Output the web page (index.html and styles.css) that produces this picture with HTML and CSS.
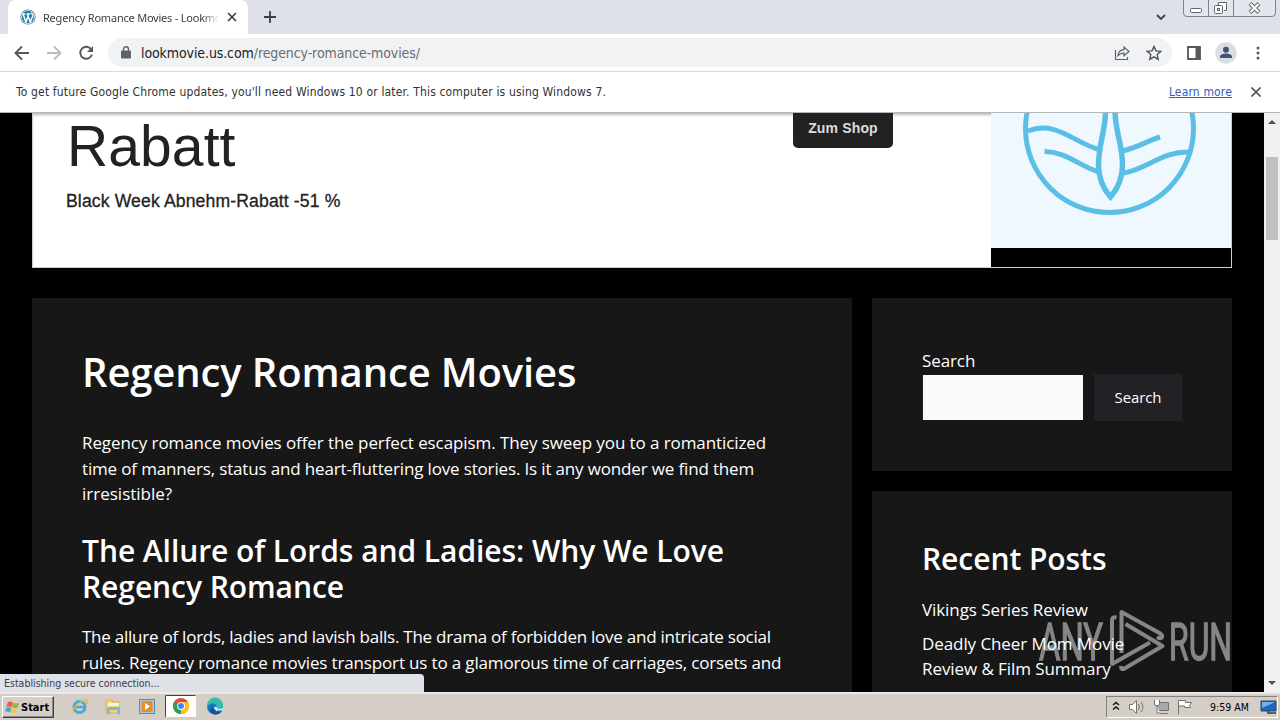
FILE: index.html
```html
<!DOCTYPE html>
<html lang="en">
<head>
<meta charset="utf-8">
<title>Regency Romance Movies</title>
<link rel="stylesheet" href="styles.css">
</head>
<body>
<div class="screen">
  <header class="tabstrip">
    <div class="tab">
      <svg class="favicon" width="16" height="16" viewBox="0 0 16 16"><circle cx="8" cy="8" r="7.600" fill="#287ba7"/><circle cx="8" cy="8" r="6.600" fill="none" stroke="#d8edf6" stroke-width=".8"/><path d="M2.200 5h3.200M6.600 5h3.700M3 5l3 8 2-5.500M7.300 5l3 8L13 6.500c.3-1-1.800-1.600-1.500-3" fill="none" stroke="#fff" stroke-width="1.500"/></svg>
      <span class="tab-title">Regency Romance Movies - Lookmov</span>
      <svg class="tab-close" width="10" height="10" viewBox="0 0 10 10"><path d="M1 1l8 8M9 1l-8 8" stroke="#3c4043" stroke-width="1.700"/></svg>
    </div>
    <svg class="newtab" width="12" height="12" viewBox="0 0 12 12"><path d="M6 0v12M0 6h12" stroke="#3c4043" stroke-width="1.800"/></svg>
    <svg class="tabsearch" width="12" height="8" viewBox="0 0 12 8"><path d="M2 2l4 4 4-4" fill="none" stroke="#3c4043" stroke-width="1.800"/></svg>
    <svg class="winctl" width="94" height="18" viewBox="0 0 94 18"><path d="M.5 0v13q0 3.500 3.500 3.500h85q3.500 0 3.500-3.500V0M25.500 0v16M50.500 0v16" fill="#e3e6ec" stroke="#7e828a"/><rect x="7.500" y="8.500" width="11" height="4" rx="1" fill="#fff" stroke="#63666c"/><path d="M35.500 5V2.500h8v8H41" fill="#fff" stroke="#63666c"/><rect x="31.500" y="5.500" width="8" height="8" rx="1" fill="#fff" stroke="#63666c"/><rect x="34.500" y="8.500" width="2" height="2" fill="none" stroke="#63666c"/><path d="M67 3.500l9 9M76 3.500l-9 9" stroke="#63666c" stroke-width="4"/><path d="M67.500 4l8 8M75.500 4l-8 8" stroke="#fff" stroke-width="2.200"/></svg>
  </header>

  <div class="toolbar">
    <svg class="nav" width="100" height="20" viewBox="0 0 100 20"><g fill="none" stroke-width="1.900"><path d="M21 10H8M14 3.500L7.500 10l6.500 6.500" stroke="#55585c"/><path d="M39 10h13M46 3.500l6.500 6.500-6.500 6.500" stroke="#babcbe"/><path d="M83.300 6.500A6 6 0 1 0 84 11.500" stroke="#55585c"/></g><path d="M85 3v6h-6z" fill="#55585c"/></svg>
    <div class="omnibox">
      <svg width="10" height="13" viewBox="0 0 10 13"><rect y="4.500" width="10" height="8" rx="1" fill="#5f6368"/><path d="M2.500 5V3.300a2.500 2.500 0 0 1 5 0V5" fill="none" stroke="#5f6368" stroke-width="1.400"/></svg>
      <span class="url">lookmovie.us.com<span class="path">/regency-romance-movies/</span></span>
      <svg class="share" width="16" height="16" viewBox="0 0 16 16"><path d="M1.500 5v9.500h12V12M4 10.500c.4-4 2.500-5.700 6-5.800V2l5 4.500-5 4.300V8.200c-2.800 0-4.500.6-6 2.300z" fill="none" stroke="#5f6368" stroke-width="1.200"/></svg>
      <svg width="16" height="16" viewBox="0 0 16 16"><path d="M8 1.500l2 4.400 4.700.5-3.500 3.200 1 4.700L8 11.900l-4.200 2.400 1-4.700L1.300 6.400 6 5.900z" fill="none" stroke="#4f5358" stroke-width="1.400"/></svg>
    </div>
    <svg class="panel" width="14" height="14" viewBox="0 0 14 14"><path d="M1 1h12v12H1z" fill="none" stroke="#55585c" stroke-width="1.800"/><path d="M8.500 1H13v12H8.500z" fill="#55585c"/></svg>
    <svg class="avatar" width="22" height="22" viewBox="0 0 22 22"><circle cx="11" cy="11" r="10.700" fill="#dadde3"/><circle cx="11" cy="7.700" r="3" fill="#46536f"/><path d="M5 16v-1.500c0-2 3.500-3 6-3s6 1 6 3V16z" fill="#46536f"/></svg>
    <svg class="dots" width="4" height="14" viewBox="0 0 4 14"><g fill="#55585c"><circle cx="2" cy="2" r="1.500"/><circle cx="2" cy="7" r="1.500"/><circle cx="2" cy="12" r="1.500"/></g></svg>
  </div>

  <div class="infobar">
    <span class="info-text">To get future Google Chrome updates, you'll need Windows 10 or later. This computer is using Windows 7.</span>
    <a class="learn">Learn more</a>
    <svg width="10" height="10" viewBox="0 0 10 10"><path d="M.5.5l9 9M9.500.5l-9 9" stroke="#55585c" stroke-width="1.700"/></svg>
  </div>

  <div class="viewport">
    <div class="page">
      <section class="banner">
        <div class="ad-copy">
          <div class="ad-title">Rabatt</div>
          <div class="ad-sub">Black Week Abnehm-Rabatt -51 %</div>
        </div>
        <div class="ad-button">Zum Shop</div>
        <div class="ad-art">
          <svg width="240" height="135" viewBox="0 0 240 135"><g fill="none" stroke="#5bbfe5" stroke-width="5"><circle cx="118.500" cy="15.500" r="84"/><path d="M114.500-2c0 20-7 33-7 54 0 14 5 24 12 32 7-8 12-17 12-32 0-21-7.500-34-7.500-54" stroke-width="5.500"/><path d="M37 18c28-11 46 12 71 18.500M53.500 38.500c21 0 34 14 53 20M131.500 38c14-3 25-10 37.500-14M132.500 60c22-3 39-22 66-21"/></g></svg>
        </div>
      </section>
      <div class="columns">
        <article class="card post">
          <h1>Regency Romance Movies</h1>
          <p class="intro"><span class="snug">Regency romance movies offer the perfect escapism. They sweep you to a romanticized</span><br><span class="tight">time of manners, status and heart-fluttering love stories. Is it any wonder we find them</span><br>irresistible?</p>
          <h2>The Allure of Lords and Ladies: Why We Love<br>Regency Romance</h2>
          <p><span class="tighter">The allure of lords, ladies and lavish balls. The drama of forbidden love and intricate social</span><br><span class="tight">rules. Regency romance movies transport us to a glamorous time of carriages, corsets and</span></p>
        </article>
        <aside>
          <div class="card search">
            <label>Search</label>
            <div class="search-row"><div class="field"></div><div class="button">Search</div></div>
          </div>
          <div class="card recent">
            <h2>Recent Posts</h2>
            <ul><li>Vikings Series Review</li><li>Deadly Cheer Mom Movie<br>Review &amp; Film Summary</li></ul>
          </div>
        </aside>
      </div>
    </div>
    <div class="scrollbar">
      <svg width="8" height="4" viewBox="0 0 8 4"><path d="M0 4l4-4 4 4z" fill="#505050"/></svg>
      <div class="thumb"></div>
      <svg class="down" width="8" height="4" viewBox="0 0 8 4"><path d="M0 0l4 4 4-4z" fill="#505050"/></svg>
    </div>
    <div class="status">Establishing secure connection...</div>
    <svg class="watermark" width="200" height="70" viewBox="1035 606 200 70"><g fill="#fff" stroke="#fff" stroke-width="1.300" font-family="Roboto, sans-serif" font-size="52"><text x="1039" y="659.500" textLength="64" lengthAdjust="spacingAndGlyphs">ANY</text><text x="1169" y="659.500" textLength="63" lengthAdjust="spacingAndGlyphs">RUN</text></g><g fill="none" stroke="#fff" stroke-width="4" stroke-linejoin="round"><path d="M1116.500 617.500q-4.500-1-4.500 3v43.500l38-21.500"/><path d="M1121.500 653v-41l38 21q4.500 3 1.500 5-2 .5-4-1"/><path d="M1125.500 624l37 22-38 22.500q-3.500 2-3.500-2.500"/></g></svg>
  </div>

  <footer class="taskbar">
    <div class="start"><svg width="15" height="15" viewBox="0 0 15 15"><path d="M3 2q3-1 5 .5L7 7Q4 6 1.500 7z" fill="#ee6335"/><path d="M8.500 2.800Q11 4 14 3l-1.500 4.500q-3 1-5-.3z" fill="#87bb43"/><path d="M1.300 7.700q3-1 5 .3l-1.200 4.500q-3-1.500-5-.5z" fill="#46a4da"/><path d="M7 8.200q2.500 1.200 5.200.3l-1.300 4.200q-3 1-5.200-.3z" fill="#f7c737"/></svg><b>Start</b></div>
    <svg class="apps" width="170" height="24" viewBox="60 696 170 24">
      <g fill="none"><circle cx="79.500" cy="708" r="5.500" stroke="#45a9df" stroke-width="3"/><path d="M74 708h12" stroke="#45a9df" stroke-width="2.500"/><path d="M72.500 714c-3-3 12-16 14.500-13 1 1 0 3-1 4" stroke="#e9bd3d" stroke-width="1.500"/></g>
      <path d="M106 701h6l1 2h6v11h-13z" fill="#f1d477" stroke="#c8aa52" stroke-width=".7"/><path d="M108 704h11v3h-11z" fill="#eef6e5"/><path d="M107 715v-5q0-2 2-2h9q2 0 2 2v5h-3v-4h-7v4z" fill="#77bce1"/>
      <rect x="139.500" y="700.500" width="15" height="14" fill="#a6c9e1" stroke="#518eb8"/><rect x="141.500" y="702" width="11" height="11" rx="2" fill="#f18a22"/><path d="M145 704l5 3.500-5 3.500z" fill="#fff"/>
      <rect x="165" y="696" width="31" height="22" fill="#fff"/><path d="M165.500 718v-21.500h30" fill="none" stroke="#424242"/><circle cx="181" cy="707" r="8" fill="#eb4638"/><path d="M181 707l-6.900-4A8 8 0 0 0 181 715l4-6z" fill="#2ba24c"/><path d="M181 707l0 8a8 8 0 0 0 7-12h-7z" fill="#fbc318"/><circle cx="181" cy="707" r="3.900" fill="#fff"/><circle cx="181" cy="707" r="3" fill="#4285f4"/>
      <circle cx="215" cy="707.500" r="8" fill="#1675c4"/><path d="M207 706a8 8 0 0 1 16 1c0 3-3 4-6 3-2-1 1-2-1-4-3-3-8-1-9 2z" fill="#35bda9"/><path d="M213 708c0 5 5 6 9 4a8 8 0 0 1-7 3.500c-5-1-7-6-2-7.500z" fill="#174f9c"/><path d="M214 708c0 4 5 4 8 3l1 1v-3c-3 2-7 1-6-1z" fill="#d9e9ee"/>
    </svg>
    <div class="tray">
      <svg width="82" height="18" viewBox="1112 698 82 18"><g fill="none" stroke="#111" stroke-width="1.500"><path d="M1113 705l3-2.500 3 2.500M1113 709.500l3-2.500 3 2.500"/></g><g fill="#fff" stroke="#737373"><path d="M1129.500 704.500h3l4-4v13l-4-4h-3z"/><path d="M1138.500 704q2 3 0 6M1141 702q4 5 0 10" fill="none"/><path d="M1157.500 702.500h11v8h-11z" fill="#a8a8a8"/><path d="M1154.500 700v4q0 1.500 1.500 1.500h2q1.500 0 1.500-1.500v-4M1157 706v7h3M1160 713.500h8" /><path d="M1178.500 714v-13.500h7v2h6l-2 3 1 2h-6v-1.500h-6"/></g></svg>
      <span class="clock">9:59 AM</span>
      <svg width="17" height="15" viewBox="0 0 17 15"><path d="M1 1h15v10H1z" fill="#1d65c1" stroke="#294769"/><path d="M2 2h13L2 8z" fill="#76aee8"/><path d="M7 11v3h9v-2h-6v-1z" fill="#52636e"/></svg>
    </div>
  </footer>
</div>
</body>
</html>
```

FILE: styles.css
```css
* { box-sizing: border-box; }
body { margin: 0; overflow: hidden; font-family: "DejaVu Sans Condensed", "DejaVu Sans", sans-serif; }
svg { display: block; flex: none; }
.screen { width: 1280px; height: 720px; display: flex; flex-direction: column; white-space: nowrap; overflow: hidden; }
.tabstrip { height: 34px; flex: none; display: flex; align-items: center; background: #dee1e8; }
.tab { width: 240px; height: 34px; margin-left: 8px; padding: 0 11px 0 12px; display: flex; align-items: center; background: #fff; border-radius: 8px 8px 0 0; }
.tab-title { width: 177px; margin-left: 7px; overflow: hidden; font-family: "Noto Sans", sans-serif; font-size: 11px; letter-spacing: -.22px; color: #3c4043; mask-image: linear-gradient(90deg, #000 160px, transparent 176px); }
.tab-close { margin-left: auto; }
.newtab { margin-left: 16px; }
.tabsearch { margin-left: auto; }
.winctl { margin: 0 3px 0 16px; align-self: flex-start; }
.toolbar { height: 38px; flex: none; display: flex; align-items: center; background: #fff; border-bottom: 1px solid #d8dadd; }
.nav { margin-left: 8px; }
.omnibox { width: 1064px; height: 29px; display: flex; align-items: center; padding: 0 10px 0 13px; background: #f0f2f4; border-radius: 15px; }
.url { margin-left: 10px; font-size: 14px; letter-spacing: -.1px; color: #202124; }
.path { color: #696d72; }
.share { margin: 0 16px 0 auto; }
.panel { margin-left: 15px; }
.avatar { margin-left: 14px; }
.dots { margin-left: 19px; }
.infobar { height: 41px; flex: none; display: flex; align-items: center; padding: 0 19px 0 16px; background: #fff; border-bottom: 1px solid #b5b7b9; font-size: 12px; letter-spacing: .16px; color: #303236; }
.learn { margin: 0 19px 0 auto; color: #2a62bd; text-decoration: underline; }
.viewport { position: relative; height: 579px; flex: none; display: flex; background: #000; }
.page { width: 1264px; padding: 0 32px; overflow: hidden; font-family: "Open Sans", sans-serif; font-size: 17px; line-height: 25.500px; color: #fff; }
.banner { display: flex; height: 155px; background: #fff; border: 1px solid #ccc; border-top: 0; box-shadow: inset 0 3px 3px -1px #bbb; font-family: "Liberation Sans", sans-serif; color: #222; }
.ad-copy { width: 760px; padding-left: 33px; }
.ad-title { font-size: 57px; line-height: 67px; letter-spacing: .1px; text-indent: 1px; }
.ad-sub { margin-top: 9px; font-size: 17.600px; letter-spacing: .13px; -webkit-text-stroke: .3px #222; }
.ad-button { width: 100px; height: 35px; padding-top: 3px; background: #222; color: #ddd; border-radius: 0 0 5px 5px; text-align: center; font-size: 14px; font-weight: 700; letter-spacing: .15px; }
.ad-art { width: 240px; margin-left: auto; background: #000; }
.ad-art svg { background: #f0f8ff; }
.columns { display: flex; gap: 20px; margin-top: 30px; height: 394px; }
.card { background: #171717; padding: 50px; }
.post { width: 820px; }
h1, h2, p, ul { margin: 0; padding: 0; }
h1 { font-size: 40px; line-height: 48px; font-weight: 600; margin-bottom: 34.400px; letter-spacing: -.13px; }
h2 { font-size: 30px; line-height: 36px; font-weight: 600; padding-top: .4px; margin-bottom: 19.600px; letter-spacing: -.06px; }
.intro { margin-bottom: 25.500px; }
.snug { letter-spacing: -.09px; }
.tight { letter-spacing: -.155px; }
.tighter { letter-spacing: -.24px; }
aside { width: 360px; display: flex; flex-direction: column; gap: 20px; }
.search { height: 173px; }
.recent { flex: 1; }
label { display: block; letter-spacing: -.1px; }
.search-row { display: flex; align-items: center; justify-content: space-between; height: 48px; }
.field { width: 161px; height: 45px; background: #fafafa; border-left: 1px solid #222; }
.button { width: 88px; height: 47px; background: #242126; text-align: center; line-height: 47px; font-size: 15px; letter-spacing: -.1px; }
ul { list-style: none; letter-spacing: -.08px; }
li { margin-bottom: 8.500px; }
.scrollbar { width: 16px; display: flex; flex-direction: column; align-items: center; padding: 7px 0; background: #f1f1f1; }
.thumb { width: 12px; height: 83px; margin-top: 33px; background: #c1c1c1; }
.down { margin-top: auto; }
.status { position: absolute; left: 0; bottom: 0; width: 424px; height: 18px; padding-left: 4px; line-height: 18px; background: #dee1e8; border-radius: 0 4px 0 0; font-size: 10.500px; color: #3c4043; }
.watermark { position: absolute; left: 1035px; top: 493px; opacity: .48; }
.taskbar { height: 28px; flex: none; display: flex; align-items: center; padding: 0 2px; background: #d5cec6; border-top: 2px solid #eeebe7; }
.start { width: 52px; height: 22px; display: flex; align-items: center; gap: 1px; padding-left: 2px; border: 1px solid; border-color: #fff #404040 #404040 #fff; font-size: 11px; box-shadow: inset -1px -1px #888; }
.apps { margin-left: 6px; }
.tray { width: 172px; height: 22px; margin-left: auto; display: flex; align-items: center; padding-left: 5px; border: 1px solid; border-color: #85817c #fff #fff #85817c; }
.clock { width: 42px; margin: 0 8px 0 16px; font-size: 10.500px; }
```
